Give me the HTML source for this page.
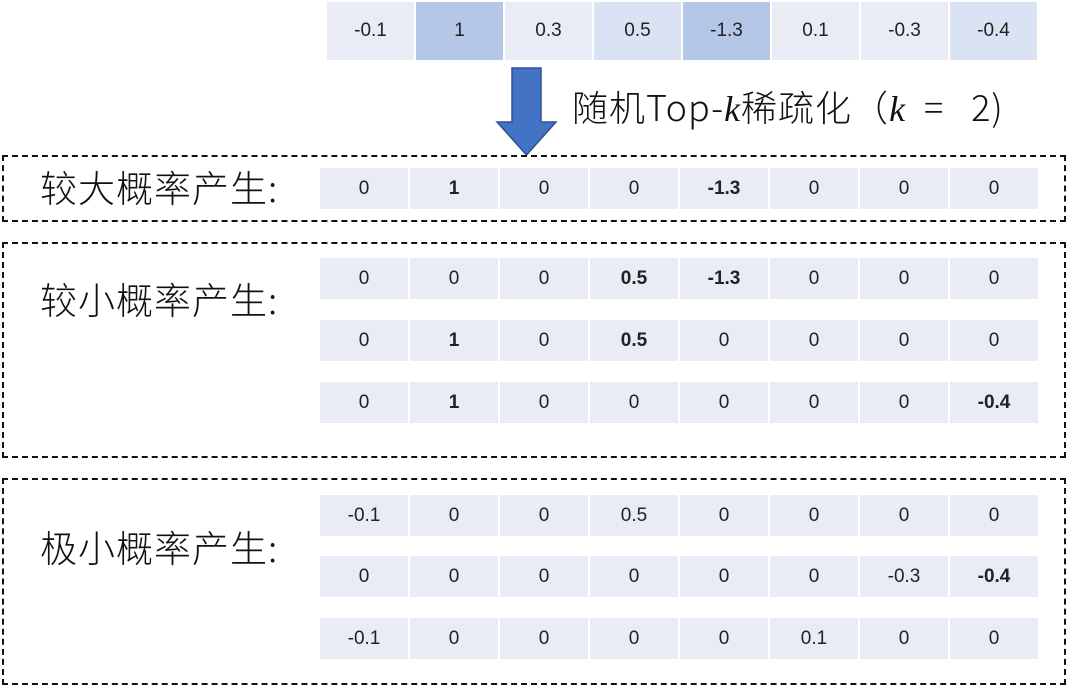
<!DOCTYPE html>
<html><head><meta charset="utf-8"><style>
body{margin:0;width:1069px;height:685px;background:#fff;position:relative;overflow:hidden;font-family:"Liberation Sans","Noto Sans CJK SC",sans-serif;}
.row{position:absolute;display:flex;}
.row div{height:100%;margin-right:2px;background:#e9ebf5;display:flex;align-items:center;justify-content:center;font-size:19px;color:#222;font-family:"Liberation Sans",sans-serif;}
.row div:last-child{margin-right:0}
.b{font-weight:bold;color:#111}
.m{background:#dae3f3!important}
.d{background:#b4c7e7!important}
.box{position:absolute;border:2px dashed #111;box-sizing:border-box;}
.lab{position:absolute;font-size:37px;color:#111;white-space:nowrap;font-family:"Noto Sans CJK SC",sans-serif;font-weight:300;line-height:1;letter-spacing:1px}
.r{width:719px;height:41px;left:320px}
.r div{width:88px}
</style></head><body>
<div class="row" style="left:327px;top:2px;width:712px;height:58px">
<div style="width:87px">-0.1</div><div class="d" style="width:87px">1</div><div style="width:87px">0.3</div><div class="m" style="width:87px">0.5</div><div class="d" style="width:87px">-1.3</div><div style="width:87px">0.1</div><div style="width:87px">-0.3</div><div class="m" style="width:87px">-0.4</div>
</div>
<svg style="position:absolute;left:495px;top:66px" width="64" height="92"><polygon points="17,2 46,2 46,56 61,56 31.5,89 2,56 17,56" fill="#4472c4" stroke="#2f528f" stroke-width="1.5"/></svg>
<div class="lab" style="left:572px;top:88px;font-size:36px;letter-spacing:1px">随机Top-<i style="font-family:'Liberation Serif',serif">k</i>稀疏化（<i style="font-family:'Liberation Serif',serif">k</i>&nbsp;&nbsp;=&nbsp;&nbsp;&nbsp;2)</div>

<div class="box" style="left:2px;top:155px;width:1064px;height:67px"></div>
<div class="lab" style="left:40px;top:168px">较大概率产生:</div>
<div class="row r" style="top:168px"><div>0</div><div class="b">1</div><div>0</div><div>0</div><div class="b">-1.3</div><div>0</div><div>0</div><div>0</div></div>

<div class="box" style="left:2px;top:242px;width:1064px;height:216px"></div>
<div class="lab" style="left:40px;top:280px">较小概率产生:</div>
<div class="row r" style="top:258px"><div>0</div><div>0</div><div>0</div><div class="b">0.5</div><div class="b">-1.3</div><div>0</div><div>0</div><div>0</div></div>
<div class="row r" style="top:320px"><div>0</div><div class="b">1</div><div>0</div><div class="b">0.5</div><div>0</div><div>0</div><div>0</div><div>0</div></div>
<div class="row r" style="top:382px"><div>0</div><div class="b">1</div><div>0</div><div>0</div><div>0</div><div>0</div><div>0</div><div class="b">-0.4</div></div>

<div class="box" style="left:2px;top:478px;width:1064px;height:207px"></div>
<div class="lab" style="left:40px;top:528px">极小概率产生:</div>
<div class="row r" style="top:495px"><div>-0.1</div><div>0</div><div>0</div><div>0.5</div><div>0</div><div>0</div><div>0</div><div>0</div></div>
<div class="row r" style="top:556px"><div>0</div><div>0</div><div>0</div><div>0</div><div>0</div><div>0</div><div>-0.3</div><div class="b">-0.4</div></div>
<div class="row r" style="top:618px"><div>-0.1</div><div>0</div><div>0</div><div>0</div><div>0</div><div>0.1</div><div>0</div><div>0</div></div>
</body></html>
